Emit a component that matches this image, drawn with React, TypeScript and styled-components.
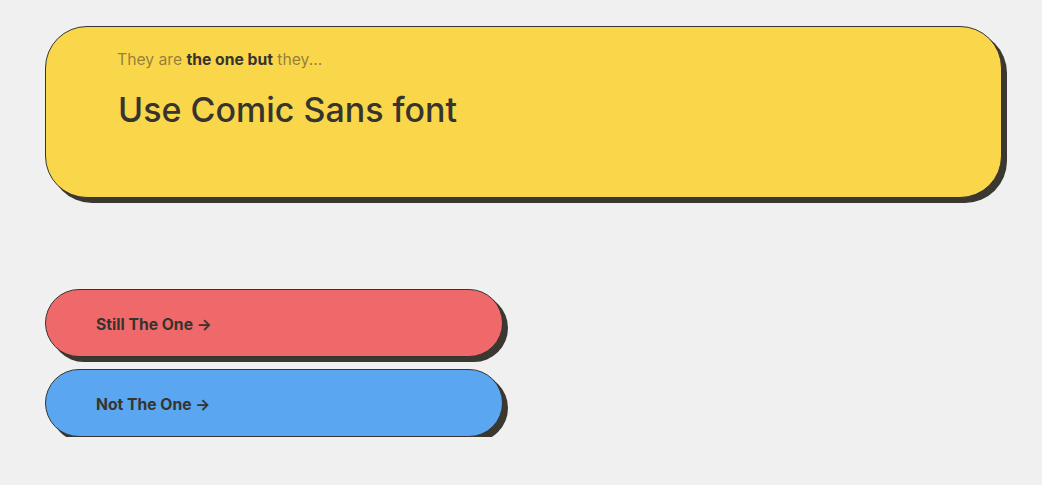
import { createGlobalStyle } from "styled-components";
import styled from "styled-components";

// ページ全体
const GlobalStyle = createGlobalStyle`
  html, body {
    margin: 0;
    padding: 0;
    background: #f0f0f0;
    font-family: Inter, "Noto Sans", sans-serif;
    color: #36342f;
  }
`;

type Tone = "red" | "blue";

const toneColors: Record<Tone, string> = {
  red: "#f0696a",
  blue: "#5aa6f0",
};

const links: { label: string; tone: Tone }[] = [
  { label: "Still The One", tone: "red" },
  { label: "Not The One", tone: "blue" },
];

export default function App() {
  return (
    <>
      <GlobalStyle />
      <Page>
        <HeroCard>
          <Lead>
            They are <strong>the one but</strong> they...
          </Lead>
          <Title>Use Comic Sans font</Title>
        </HeroCard>
        <LinkList>
          {links.map((link) => (
            <PillLink key={link.label} href="#" $tone={link.tone}>
              {link.label} →
            </PillLink>
          ))}
        </LinkList>
      </Page>
    </>
  );
}

const Page = styled.div`
  display: flex;
  flex-direction: column;
  padding: 26px 0 0 45px;
`;

const HeroCard = styled.section`
  box-sizing: border-box;
  width: 957px;
  height: 172px;
  padding: 22px 71px;
  background: #fad64a;
  border: 1px solid #36342f;
  border-radius: 42px;
  box-shadow: 5px 5px 0 #3a3830;
`;

const Lead = styled.p`
  margin: 0;
  font-size: 15.7px;
  line-height: 22px;
  color: rgba(54, 52, 47, 0.55);

  strong {
    font-weight: 700;
    color: #36342f;
  }
`;

const Title = styled.h1`
  margin: 19px 0 0 1px;
  font-size: 34px;
  line-height: 40px;
  font-weight: 500;
  color: #36342f;
`;

const LinkList = styled.nav`
  display: flex;
  flex-direction: column;
  gap: 12px;
  margin-top: 91px;
`;

const PillLink = styled.a<{ $tone: Tone }>`
  box-sizing: border-box;
  display: flex;
  align-items: center;
  width: 458px;
  height: 68px;
  padding: 2px 50px 0;
  background: ${({ $tone }) => toneColors[$tone]};
  border: 1px solid #36342f;
  border-radius: 34px;
  box-shadow: 5px 5px 0 #3a3830;
  font-size: 15.7px;
  font-weight: 700;
  color: #36342f;
  text-decoration: none;
`;
